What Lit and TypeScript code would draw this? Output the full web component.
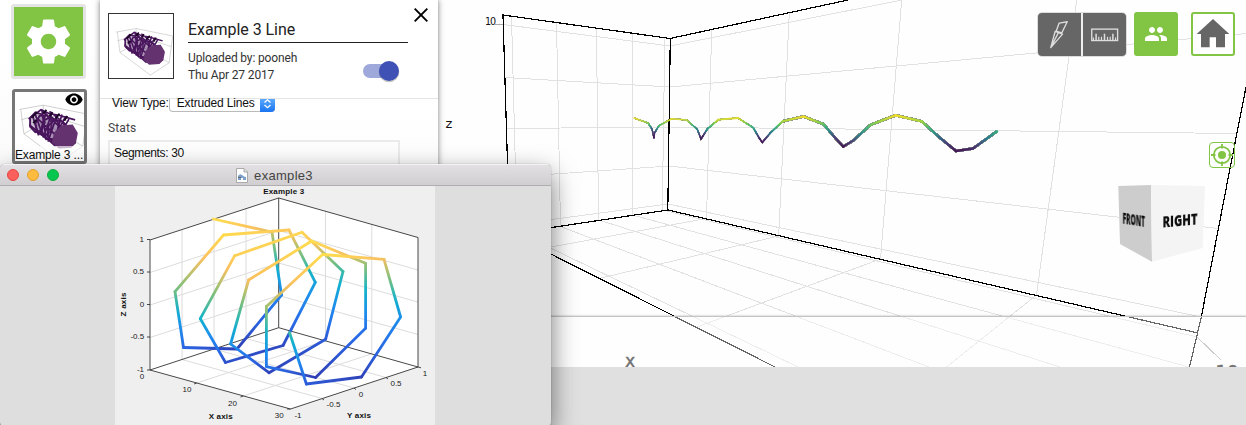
import { LitElement, html, svg, css } from "lit";
import { customElement, property } from "lit/decorators.js";

type Pt = [number, number];
type RGB = [number, number, number];

const VIRIDIS: RGB[] = [[68, 20, 84], [72, 62, 120], [42, 125, 140], [56, 182, 128], [150, 212, 62], [246, 224, 40]];
const PARULA: RGB[] = [[48, 62, 180], [42, 102, 228], [30, 140, 238], [16, 180, 205], [125, 192, 120], [252, 192, 96], [255, 222, 76]];

const sample = (map: RGB[], v: number): string => {
  const t = Math.min(0.9999, Math.max(0, (v + 1) / 2)) * (map.length - 1);
  const i = Math.floor(t);
  const f = t - i;
  return `rgb(${map[i].map((c, k) => Math.round(c + (map[i + 1][k] - c) * f)).join(",")})`;
};

/* A polyline whose vertex i carries the value cos(i), coloured through a map. */
const shaded = (pts: Pt[], map: RGB[], id: string, width: (i: number) => number) =>
  pts.slice(1).map((b, i) => {
    const a = pts[i];
    const v0 = Math.cos(i);
    const v1 = Math.cos(i + 1);
    return svg`
      <linearGradient id=${id + i} gradientUnits="userSpaceOnUse" x1=${a[0]} y1=${a[1]} x2=${b[0]} y2=${b[1] + 0.01}>
        ${[0, 0.2, 0.4, 0.6, 0.8, 1].map((s) => svg`<stop offset=${s} stop-color=${sample(map, v0 + (v1 - v0) * s)}></stop>`)}
      </linearGradient>
      <path d="M${a[0]} ${a[1]}L${b[0]} ${b[1]}" stroke="url(#${id + i})" stroke-width=${width(i)} stroke-linecap="round"></path>`;
  });

const CURVE: Pt[] = [
  [634, 118], [648, 123], [652, 129], [654, 138], [654.5, 133], [659, 125.7], [671.7, 118.7], [686.7, 120],
  [697.3, 129.3], [701, 139], [703, 136], [707.3, 129], [718.3, 119.7], [738, 118], [753.3, 127.7], [759.5, 138.5],
  [762.3, 142.3], [770, 133.3], [782.7, 121.3], [803.5, 116.5], [823.3, 124], [834, 136.5], [843.3, 146.7],
  [853, 140.7], [870.7, 124.7], [895.7, 115.3], [921.7, 121.3], [939, 137], [956, 151], [973, 148.5], [997, 131.3],
];

const HELIX: Pt[] = [
  [213.5, 219], [272, 232], [281.5, 295], [237, 349], [183.5, 347.5], [175, 291.7], [223.5, 235], [289, 230],
  [315.3, 282.3], [283, 345.5], [225.5, 362.5], [200.3, 318.7], [234.7, 255.7], [302, 232.3], [343, 271.5],
  [325.6, 339.3], [269, 372.7], [230.6, 344], [248.6, 280], [311.7, 241], [365.6, 263.3], [365.6, 328.3],
  [315.6, 377.5], [266.4, 366.6], [266.4, 306.5], [322.6, 254.5], [384, 259.3], [400.6, 317], [361.5, 377],
  [306.4, 384], [289.5, 332.5],
];

const SCENE_GRID = [
  "M511.5 16L515.5 170", "M556.5 22L560.5 226", "M596.5 28L598.5 220", "M632.5 33L632.5 215", "M664.8 38L662.3 210",
  "M503 24.5L670 46", "M505 77.5L670 87", "M507 128.5L670 127", "M540 175L669 166", "M540 221L668 204",
  "M670 46L902 0", "M670 87L1246 33.5", "M670 127L1237 133.5", "M669 166L1218 228.5", "M668 204L1201 317",
  "M711.7 30L706.5 219", "M789.3 13L778.7 236", "M901.7 0L880.5 259", "M1076.7 0L1036.5 295",
  "M560.5 226.5L929 367", "M599 220L1060 367", "M632.5 215L1189 367", "M662.5 210L1197 337", "M540 243L798 367",
  "M540 249L706.5 218.5", "M601 278L778.7 236", "M697 327L880.5 259", "M946.5 367L1036.5 295",
];
const SCENE_BOX = "M508 180L503 15L670 38.5L848 0M670.3 38.5L667.8 210M540 229.3L668 210L1198 333M1246 87L1229.7 170L1201.5 316L1189.5 367M540 248.5L775 367";

@customElement("scene-view")
export class SceneView extends LitElement {
  static styles = css`
    :host { display: block; }
    svg { display: block; }
    .lbl { font-family: "DejaVu Sans", sans-serif; fill: #111; }
    .cube { font-family: "Open Sans", sans-serif; font-weight: 800; fill: #0b0b0b; text-anchor: middle; filter: blur(0.35px); }
  `;
  render() {
    return html`<svg width="1246" height="425" viewBox="0 0 1246 425" fill="none">
      <g shape-rendering="crispEdges">
        <g stroke="#e1e1e1">${SCENE_GRID.map((d) => svg`<path d=${d}></path>`)}</g>
        <path d="M495 24.5H503M1197 337L1221 360" stroke="#aaa"></path>
        <path d=${SCENE_BOX} stroke="#000" stroke-width="1.2"></path>
        <polyline points=${CURVE.slice(0, 19).map((p) => p.join(",")).join(" ")} stroke="#3a4a3c" stroke-opacity=".55" stroke-width="2"></polyline>
        <polyline points=${CURVE.slice(18).map((p) => p.join(",")).join(" ")} stroke="#3a4a3c" stroke-opacity=".6" stroke-width="3.3"></polyline>
      </g>
      ${shaded(CURVE, VIRIDIS, "v", (i) => 1.4 + i * 0.035)}
      <text class="lbl" x="485" y="25.3" font-size="9.6" textLength="11">10</text>
      <text class="lbl" x="445.4" y="128" font-size="13">z</text>
      <text class="lbl" x="625.3" y="366.7" font-size="14" stroke="#111" stroke-width=".7">X</text>
      <text class="lbl" x="1215.5" y="377.5" font-size="18" stroke="#111" stroke-width=".6">10</text>
      <path d="M1118.3 186L1151 185L1152 261.8L1120 244Z" fill="#cdcdcd"></path>
      <path d="M1151 185L1205 186L1202.7 248L1152 261.8Z" fill="#f4f4f4"></path>
      <text class="cube" font-size="13" transform="matrix(.52 .08 0 1.15 1133.7 225.3)" textLength="43" lengthAdjust="spacingAndGlyphs">FRONT</text>
      <text class="cube" font-size="15" transform="matrix(.78 -.07 0 1 1180 226)" textLength="45" lengthAdjust="spacingAndGlyphs">RIGHT</text>
    </svg>`;
  }
}

@customElement("helix-thumb")
export class HelixThumb extends LitElement {
  @property() box = "324 39 198 198";
  static styles = css`
    :host { display: block; width: 100%; height: 100%; }
    svg { display: block; width: 100%; height: 100%; }
  `;
  render() {
    const rings = [0, 1, 2, 3].map((k) => {
      const cx = 392 + k * 17;
      const cy = 128 + k * 8;
      const rx = 20 + k * 1.8;
      const ry = 26 + k * 2;
      return [0, 1, 2, 3, 4, 5, 6]
        .map((j) => `${cx + rx * Math.cos(j * 0.9 + k * 0.6)},${cy + ry * Math.sin(j * 0.9 + k * 0.6)}`)
        .join(" ");
    });
    return html`<svg viewBox=${this.box} fill="none" preserveAspectRatio="none">
      <path d="M346 95L408 84L521 107L510 190L452 228L358 158L350 95M408 84V128L358 158M408 128L510 190M350 122L408 105L518 140" stroke="#c2c2c2" stroke-width="2"></path>
      ${rings.map((p) => svg`<polygon points=${p} stroke="#48145c" stroke-width="5" fill="#5a2a6c" fill-opacity=".3"></polygon>`)}
      <path d="M370 120L402 96L424 106L448 110L490 122M372 134L398 156L420 172L440 190M380 110L396 162M386 104L408 166M404 94L416 174M416 100L400 158M430 104L408 168M444 108L420 178M456 108L444 150M466 112L430 180M474 120L436 186M402 96L462 150M388 114L450 170M424 100L476 142" stroke="#48145c" stroke-width="4.5"></path>
      <path d="M378 116L392 102M408 106L416 96M424 112L432 102M440 118L450 106M462 124L470 112M382 130L390 122" stroke="#1c0626" stroke-width="5"></path>
      <path d="M436 154L456 136L484 134L497 156L492 182L480 194L448 196L430 180Z" fill="#64336f"></path>
    </svg>`;
  }
}

@customElement("side-rail")
export class SideRail extends LitElement {
  static styles = css`
    :host { display: flex; flex-direction: column; gap: 10px; box-sizing: border-box; width: 100px; padding: 4px 0 0 11px; background: linear-gradient(#fff 40px, #fafafa); }
    .gear { display: grid; place-items: center; box-sizing: border-box; width: 75px; height: 75px; border: 3px solid #e4e4e4; border-radius: 3px; background: #82c443; }
    .item { display: grid; box-sizing: border-box; width: 75px; height: 75px; margin-left: 1px; border: 3px solid #777; border-radius: 3px; background: #fff; }
    .item > * { grid-area: 1 / 1; min-width: 0; }
    .eye { justify-self: end; margin: -2px 0 0; }
    .name { align-self: end; height: 15px; font: 12px/19px "Liberation Sans", sans-serif; letter-spacing: -.15px; color: #111; background: rgba(255, 255, 255, .65); white-space: nowrap; }
  `;
  render() {
    return html`
      <div class="gear"><svg width="53" height="53" viewBox="0 0 24 24" fill="#fff"><path d="M19.43 12.98c.04-.32.07-.64.07-.98s-.03-.66-.07-.98l2.11-1.65c.19-.15.24-.42.12-.64l-2-3.46c-.12-.22-.39-.3-.61-.22l-2.49 1c-.52-.4-1.08-.73-1.69-.98l-.38-2.65C14.46 2.18 14.25 2 14 2h-4c-.25 0-.46.18-.49.42l-.38 2.65c-.61.25-1.17.59-1.69.98l-2.49-1c-.23-.09-.49 0-.61.22l-2 3.46c-.13.22-.07.49.12.64l2.11 1.65c-.04.32-.07.65-.07.98s.03.66.07.98l-2.11 1.65c-.19.15-.24.42-.12.64l2 3.46c.12.22.39.3.61.22l2.49-1c.52.4 1.08.73 1.69.98l.38 2.65c.03.24.24.42.49.42h4c.25 0 .46-.18.49-.42l.38-2.65c.61-.25 1.17-.59 1.69-.98l2.49 1c.23.09.49 0 .61-.22l2-3.46c.12-.22.07-.49-.12-.64l-2.11-1.65zM12 15.5c-1.93 0-3.5-1.57-3.5-3.5s1.57-3.5 3.5-3.5 3.5 1.57 3.5 3.5-1.57 3.5-3.5 3.5z"></path></svg></div>
      <div class="item">
        <helix-thumb box="335 50 178 178"></helix-thumb>
        <svg class="eye" width="20" height="19" viewBox="0 0 24 24"><path d="M12 4.5C7 4.5 2.73 7.61 1 12c1.73 4.39 6 7.5 11 7.5s9.27-3.11 11-7.5c-1.73-4.39-6-7.5-11-7.5zM12 17c-2.76 0-5-2.24-5-5s2.24-5 5-5 5 2.24 5 5-2.24 5-5 5zm0-8c-1.66 0-3 1.34-3 3s1.34 3 3 3 3-1.34 3-3-1.34-3-3-3z"></path></svg>
        <div class="name">Example 3 ...</div>
      </div>`;
  }
}

@customElement("detail-panel")
export class DetailPanel extends LitElement {
  static styles = css`
    :host { display: flex; flex-direction: column; width: 338px; background: #fff; box-shadow: 0 0 6px rgba(0, 0, 0, .5); color: #222; }
    .head { display: flex; box-sizing: border-box; height: 99px; padding: 13px 0 0 8px; border-bottom: 1px solid #e4e4e4; box-shadow: 0 1px 2px rgba(0, 0, 0, .08); font-family: Roboto, sans-serif; }
    .thumb { box-sizing: border-box; width: 66px; height: 66px; border: 1px solid #333; }
    .info { width: 220px; margin-left: 14px; }
    .title { box-sizing: border-box; height: 30px; padding-top: 6px; border-bottom: 1px solid #222; font-size: 16px; line-height: 22px; letter-spacing: -.05px; }
    .meta { display: flex; justify-content: space-between; padding-top: 7px; font-size: 12px; line-height: 17px; letter-spacing: -.15px; color: #333; }
    .switch { margin: 9px 5px 0 0; }
    .close { margin: -5px 0 0 6px; }
    .body { padding-left: 8px; background: linear-gradient(#fff, #fcfcfc 70px); flex: 1; font: 12px/15px "Liberation Sans", sans-serif; }
    .row { display: flex; padding-left: 4px; height: 12px; line-height: 9px; color: #111; letter-spacing: -.15px; white-space: nowrap; }
    .select { display: flex; box-sizing: border-box; width: 106px; height: 13px; margin-left: 0; border: 1px solid #bbb; border-top: none; border-radius: 0 0 4px 4px; justify-content: space-between; padding-left: 7px; }
    .row svg { width: 15px; height: 13px; margin-right: -1px; flex: none; border-radius: 0 0 4px 0; background: linear-gradient(#5aa9fb, #1a74f2); }
    .stats { padding-top: 10px; font: 12px/15px Roboto, sans-serif; letter-spacing: .1px; color: #444; }
    .box { box-sizing: border-box; width: 292px; height: 40px; margin-top: 4px; padding: 4px; border: 2px solid #ebebeb; color: #111; letter-spacing: -.35px; }
  `;
  render() {
    return html`
      <div class="head">
        <div class="thumb"><helix-thumb></helix-thumb></div>
        <div class="info">
          <div class="title">Example 3 Line</div>
          <div class="meta">
            <div>Uploaded by: pooneh<br />Thu Apr 27 2017</div>
            <svg class="switch" width="40" height="24" viewBox="0 0 40 24">
              <rect x="0" y="5" width="34" height="14" rx="7" fill="#9fa8da"></rect>
              <circle cx="26" cy="13" r="10.3" fill="#000" opacity=".22"></circle>
              <circle cx="26" cy="12" r="10" fill="#3f51b5"></circle>
            </svg>
          </div>
        </div>
        <svg class="close" width="14" height="14" viewBox="0 0 14 14" stroke="#000" stroke-width="1.9"><path d="M.7 .7L13.3 13.3M13.3 .7L.7 13.3"></path></svg>
      </div>
      <div class="body">
        <div class="row">
          <span>View Type:</span>
          <div class="select">
            <span>Extruded Lines</span>
            <svg viewBox="0 0 15 13" fill="none" stroke="#fff" stroke-width="1.3"><path d="M4.5 3.5L7.5 .8L10.5 3.5M4.5 6L7.5 8.7L10.5 6"></path></svg>
          </div>
        </div>
        <div class="stats">Stats</div>
        <div class="box">Segments: 30</div>
      </div>`;
  }
}

@customElement("tool-bar")
export class ToolBar extends LitElement {
  static styles = css`
    :host { display: flex; flex-direction: column; align-items: flex-end; padding: 12px 11px 0 0; gap: 86px; }
    .row { display: flex; align-items: flex-start; }
    .pair { display: flex; gap: 2px; box-sizing: border-box; width: 90px; height: 45px; border: 1px solid #ddd; border-radius: 5px; overflow: hidden; background: #eee; }
    .pair svg { flex: 1; height: 43px; min-width: 0; background: #666; }
    .people { display: grid; place-items: center; width: 44px; height: 44px; margin-left: 7px; border-radius: 3px; background: #82c443; }
    .home { box-sizing: border-box; width: 44px; height: 44px; margin-left: 13px; border: 2px solid #82c443; border-radius: 3px; background: #fff; }
    .home svg { display: block; }
    .locate { display: grid; place-items: center; box-sizing: border-box; width: 26px; height: 26px; margin-top: -1px; border: 1px solid #82c443; border-radius: 4px; }
  `;
  render() {
    return html`
      <div class="row">
        <div class="pair">
          <svg viewBox="55 40 128 126" fill="none" stroke="#ddd" stroke-width="4" stroke-linejoin="round"><path d="M118 69L142 65L126 98L109 93ZM106 94L128 102L93 142ZM116 97L93 142" stroke-linecap="round"></path></svg>
          <svg viewBox="189 40 128 126" fill="none" stroke="#ddd" stroke-width="4"><rect x="215" y="87" width="77" height="34"></rect><path d="M228 101V119M253 101V119M278 101V119" stroke-width="4.5"></path><path d="M220 112V119M236 110V119M244 110V119M262 110V119M270 110V119M286 112V119" stroke-width="3.5"></path></svg>
        </div>
        <div class="people"><svg width="24" height="24" viewBox="0 0 24 24" fill="#fff"><path d="M16 11c1.66 0 2.99-1.34 2.99-3S17.66 5 16 5c-1.66 0-3 1.34-3 3s1.34 3 3 3zm-8 0c1.66 0 2.99-1.34 2.99-3S9.66 5 8 5C6.34 5 5 6.34 5 8s1.34 3 3 3zm0 2c-2.33 0-7 1.17-7 3.5V19h14v-2.5c0-2.33-4.67-3.5-7-3.5zm8 0c-.29 0-.62.02-.97.05 1.16.84 1.97 1.97 1.97 3.45V19h6v-2.5c0-2.33-4.67-3.5-7-3.5z"></path></svg></div>
        <div class="home"><svg width="40" height="40" viewBox="519 42 120 120" fill="#666"><path d="M579 57L628 102H615V142H588V112H569V142H543V102H530Z"></path></svg></div>
      </div>
      <div class="locate"><svg width="24" height="24" viewBox="0 0 24 24" fill="none" stroke="#82c443" stroke-width="1.8"><circle cx="12" cy="12" r="8.2"></circle><path d="M12 1V5.5M12 18.5V23M1 12H5.5M18.5 12H23"></path><circle cx="12" cy="12" r="4" fill="#82c443" stroke="none"></circle></svg></div>`;
  }
}

@customElement("figure-window")
export class FigureWindow extends LitElement {
  static styles = css`
    :host { display: block; width: 551px; height: 262px; border-radius: 5px 5px 4px 4px; background: #dedede; box-shadow: 0 10px 26px rgba(0, 0, 0, .55), 0 0 1px rgba(0, 0, 0, .5); overflow: hidden; }
    .bar { display: grid; grid-template-columns: 1fr auto 1fr; align-items: center; box-sizing: border-box; height: 22px; border-top: 1px solid #f3f3f3; border-bottom: 1px solid #b0aeb0; background: linear-gradient(#e2e0e2, #d0ced0); }
    .lights { display: flex; gap: 8px; padding-left: 7px; }
    .lights i { box-sizing: border-box; width: 12px; height: 12px; border-radius: 50%; }
    .red { background: #fc605c; border: 1px solid #e2463f; }
    .amber { background: #fdbc40; border: 1px solid #e0a033; }
    .green { background: #05c750; border: 1px solid #12ac3c; }
    .title { display: flex; align-items: center; gap: 6px; padding: 1px 0 0; margin-right: 2px; font: 13px/19px "Liberation Sans", sans-serif; letter-spacing: .3px; color: #444; }
    .plot { display: block; margin-left: 115px; background: #efefef; }
    .t { font: 8px "Liberation Sans", sans-serif; fill: #222; text-anchor: middle; }
    .b { font: bold 8px "Liberation Sans", sans-serif; fill: #111; text-anchor: middle; }
  `;
  render() {
    const grid = [
      "M182 229.5V359.5", "M214 219V349", "M246 208.5V338.5", "M325.5 211V340.7", "M371.8 224V353.8",
      "M150 272.5L278.7 230.5L418 270", "M150 305L278.7 263L418 302", "M150 337.5L278.7 295.5L418 334.5",
      "M182 359.5L322 398.5", "M214 349L354 388", "M246 338.5L386 377.5", "M196.7 383L325.5 340.7", "M243.3 396L371.8 353.8",
    ];
    const labels: [string, number, number][] = [
      ["1", 141.7, 241.5], ["0.5", 138.5, 274], ["0", 142, 306.7], ["-0.5", 137.3, 339], ["-1", 140.5, 372], ["0", 142, 379],
      ["10", 187, 392.2], ["20", 232.5, 405.5], ["30", 279.3, 417.7], ["-1", 298, 417.7], ["-0.5", 333.5, 407.3],
      ["0", 361, 396.5], ["0.5", 396, 386], ["1", 425, 375.5],
    ];
    return html`
      <div class="bar">
        <div class="lights"><i class="red"></i><i class="amber"></i><i class="green"></i></div>
        <div class="title"><svg width="12" height="15" viewBox="0 0 12 15"><path d="M.5 .5H8L11.5 4V14.5H.5Z" fill="#fff" stroke="#aaa"></path><path d="M8 .5V4H11.5" fill="#ddd" stroke="#aaa"></path><path d="M2 8Q4 5 6 7T10 9V12H7V10H5V12H2Z" fill="#7fa2cc"></path><path d="M2 9H5V10H2Z" fill="#666"></path></svg>example3</div>
      </div>
      <svg class="plot" width="320" height="239" viewBox="115 186 320 239" fill="none">
        <path d="M150 240L278.7 198L418 237.5V367L290.5 409L150 370Z" fill="#fff"></path>
        <g stroke="#dcdcdc">${grid.map((d) => svg`<path d=${d}></path>`)}</g>
        <path d="M150 240L278.7 198L418 237.5V367L290.5 409L150 370ZM278.7 198V327.7M150 370L278.7 327.7L418 367M147 239.5H150M147 272H150M147 304.5H150M147 337H150M147 370H150M418 367L421 367.8M386 377.5L388 379M354 388L356 389.5M322 398.5L324 400M196.7 383L194 384M243.3 396L240.5 397M290.5 409L287 409" stroke="#333" stroke-width=".9"></path>
        ${shaded(HELIX, PARULA, "p", () => 2.8)}
        ${labels.map(([s, x, y]) => svg`<text class="t" x=${x} y=${y}>${s}</text>`)}
        <text class="b" x="283.7" y="194" textLength="41">Example 3</text>
        <text class="b" x="220.7" y="419.3" textLength="24">X axis</text>
        <text class="b" x="359" y="418.3" textLength="24">Y axis</text>
        <text class="b" transform="translate(126 304.5) rotate(-90)" textLength="24">Z axis</text>
      </svg>`;
  }
}

@customElement("app-root")
export class AppRoot extends LitElement {
  static styles = css`
    :host { display: grid; grid-template: 425px / 1246px; width: 1246px; height: 425px; overflow: hidden; background: #fefefe; }
    scene-view, tool-bar, .drawer, .side, .window { grid-area: 1 / 1; min-width: 0; min-height: 0; }
    .drawer { align-self: end; display: flex; flex-direction: column; height: 109px; }
    .veil { box-sizing: border-box; height: 51px; border-top: 1px solid #c4c4c4; background: rgba(255, 255, 255, .4); box-shadow: 0 0 2px rgba(0, 0, 0, .3); }
    .footer { flex: 1; background: #e0e0e0; }
    .side { display: flex; justify-self: start; height: 200px; }
    .window { display: block; padding-top: 164px; justify-self: start; }
  `;
  render() {
    return html`
      <scene-view></scene-view>
      <div class="drawer"><div class="veil"></div><div class="footer"></div></div>
      <tool-bar></tool-bar>
      <div class="side"><side-rail></side-rail><detail-panel></detail-panel></div>
      <div class="window"><figure-window></figure-window></div>`;
  }
}
